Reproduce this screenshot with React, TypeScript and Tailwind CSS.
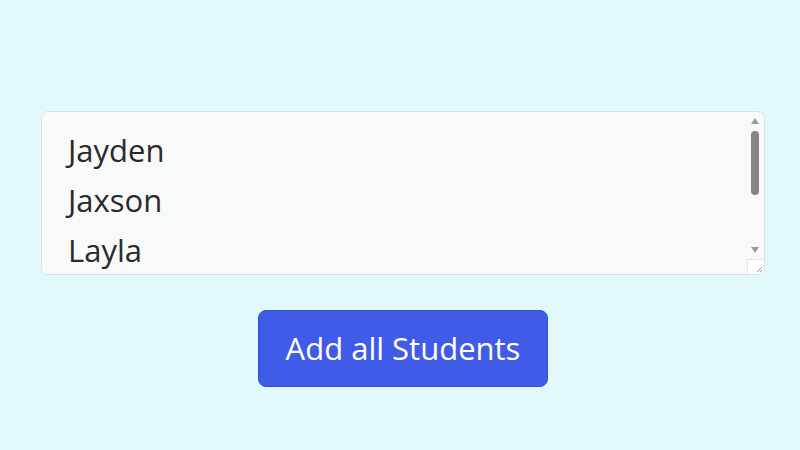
const students = ["Jayden", "Jaxson", "Layla"];

function FakeScrollbar() {
  return (
    <div className="flex w-[18px] shrink-0 flex-col items-center pt-[6px]">
      <div className="h-0 w-0 border-x-[4px] border-b-[6px] border-x-transparent border-b-[#9a9a9a]" />
      <div className="mt-[7px] h-[64px] w-[8px] rounded-full bg-[#858585]" />
      <div className="flex-1" />
      <div className="mb-[6px] h-0 w-0 border-x-[4px] border-t-[6px] border-x-transparent border-t-[#9a9a9a]" />
      <div className="relative h-[15px] w-[17px] border-l border-t border-[#e3e8ea] bg-white">
        <svg className="absolute bottom-[1px] right-[1px]" width="8" height="8" viewBox="0 0 8 8">
          <path d="M7 2 L2 7 M7 5 L5 7" stroke="#9a9a9a" strokeWidth="1" />
        </svg>
      </div>
    </div>
  );
}

export default function App() {
  return (
    <div
      className="flex h-[450px] w-[800px] flex-col items-center bg-[#e2f9fc] pl-[6px] pt-[111px]"
      style={{ fontFamily: '"Open Sans", "Noto Sans", sans-serif' }}
    >
      <div className="flex h-[164px] w-[724px] overflow-hidden rounded-[7px] border border-[#d3e3e8] bg-[#f8fafa]">
        <ul className="flex-1 pl-[26px] pt-[13px] text-[31px] leading-[50px] text-[#2a2a2a]">
          {students.map((s) => (
            <li key={s}>{s}</li>
          ))}
        </ul>
        <FakeScrollbar />
      </div>
      <button
        type="button"
        className="mt-[35px] h-[77px] w-[290px] rounded-[8px] border border-[#3550d6] bg-[#3f5be8] text-[31px] text-white"
      >
        Add all Students
      </button>
    </div>
  );
}
